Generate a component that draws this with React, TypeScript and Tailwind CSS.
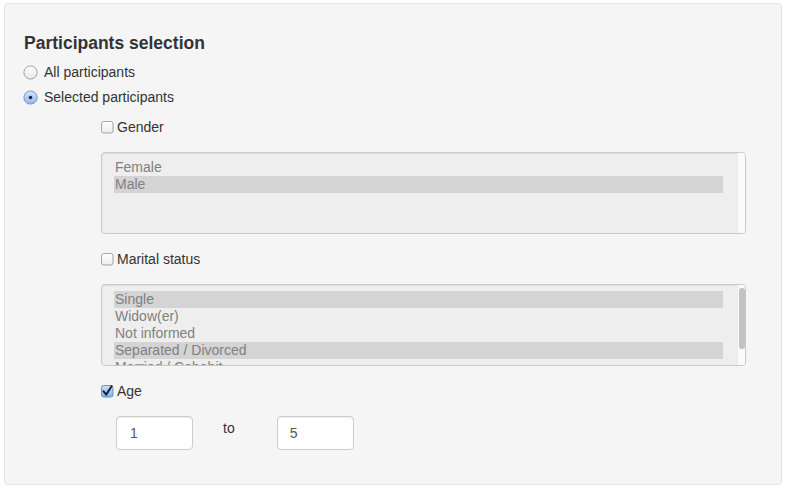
import React from "react";

const font = { fontFamily: '"Liberation Sans", Arial, Helvetica, sans-serif' };

function Radio({ checked }: { checked?: boolean }) {
  return (
    <svg width="15" height="15" viewBox="0 0 15 15" className="shrink-0">
      <defs>
        <linearGradient id={checked ? "rg1" : "rg0"} x1="0" y1="0" x2="0" y2="1">
          {checked ? (
            <>
              <stop offset="0" stopColor="#d6e6fb" />
              <stop offset="1" stopColor="#8fb7ee" />
            </>
          ) : (
            <>
              <stop offset="0" stopColor="#ffffff" />
              <stop offset="1" stopColor="#e6e6e6" />
            </>
          )}
        </linearGradient>
      </defs>
      <circle cx="7.5" cy="7.5" r="6.6" fill={`url(#${checked ? "rg1" : "rg0"})`} stroke={checked ? "#6a8fc4" : "#9a9a9a"} strokeWidth="0.9" />
      {checked && <circle cx="7.5" cy="7.5" r="1.8" fill="#1d2b44" />}
    </svg>
  );
}

function Checkbox({ checked }: { checked?: boolean }) {
  return (
    <svg width="13" height="13" viewBox="0 0 13 13" className="shrink-0">
      <defs>
        <linearGradient id={checked ? "cg1" : "cg0"} x1="0" y1="0" x2="0" y2="1">
          {checked ? (
            <>
              <stop offset="0" stopColor="#cfe1fa" />
              <stop offset="1" stopColor="#86b0ec" />
            </>
          ) : (
            <>
              <stop offset="0" stopColor="#ffffff" />
              <stop offset="1" stopColor="#ececec" />
            </>
          )}
        </linearGradient>
      </defs>
      <rect x="0.5" y="0.5" width="11.5" height="11.5" rx="2.2" fill={`url(#${checked ? "cg1" : "cg0"})`} stroke={checked ? "#5f86bd" : "#9a9a9a"} strokeWidth="0.9" />
      {checked && <path d="M2.6 6.4 L5.2 9.6 L10.6 1.2" fill="none" stroke="#16223a" strokeWidth="2" strokeLinecap="round" strokeLinejoin="round" />}
    </svg>
  );
}

function ListBox({ items, selected, thumb }: { items: string[]; selected: number[]; thumb?: boolean }) {
  return (
    <div className="relative w-[645px] h-[82px] rounded border border-[#c9c9c9] bg-[#eeeeee] overflow-hidden shadow-[inset_0_1px_1px_rgba(0,0,0,0.075)]">
      <div className="pt-[6px] pl-[12px] pr-[22px]">
        {items.map((it, i) => (
          <div
            key={it}
            className={`h-[17px] leading-[17px] text-[14px] text-[#808080] pl-[1px] ${selected.includes(i) ? "bg-[#d4d4d4]" : ""}`}
          >
            {it}
          </div>
        ))}
      </div>
      <div className="absolute right-0 top-0 bottom-0 w-[8px] bg-[#fafafa] border-l border-[#ececec]">
        {thumb && <div className="absolute left-[1px] top-[3px] w-[6px] h-[61px] rounded-full bg-[#c2c2c2]" />}
      </div>
    </div>
  );
}

export default function App() {
  return (
    <div className="w-[786px] h-[490px] bg-white pt-[3px] pl-[4px]" style={font}>
      <div className="w-[778px] h-[482px] rounded border border-[#e3e3e3] bg-[#f5f5f5] pl-[19px] pt-[29px] text-[#333333]">
        <div className="text-[17.5px] leading-[20px] font-bold text-[#333333]">Participants selection</div>
        <div className="mt-[7px] flex flex-col">
          <div className="h-[25px] flex items-center gap-[6px] -ml-[1px]">
            <Radio />
            <span className="text-[14px]">All participants</span>
          </div>
          <div className="h-[25px] flex items-center gap-[6px] -ml-[1px]">
            <Radio checked />
            <span className="text-[14px]">Selected participants</span>
          </div>
        </div>
        <div className="ml-[77px]">
          <div className="mt-[7px] h-[20px] flex items-center gap-[3px]">
            <Checkbox />
            <span className="text-[14px]">Gender</span>
          </div>
          <div className="mt-[15px]">
            <ListBox items={["Female", "Male"]} selected={[1]} />
          </div>
          <div className="mt-[15px] h-[20px] flex items-center gap-[3px]">
            <Checkbox />
            <span className="text-[14px]">Marital status</span>
          </div>
          <div className="mt-[15px]">
            <ListBox
              items={["Single", "Widow(er)", "Not informed", "Separated / Divorced", "Married / Cohabit"]}
              selected={[0, 3]}
              thumb
            />
          </div>
          <div className="mt-[15px] h-[20px] flex items-center gap-[3px]">
            <Checkbox checked />
            <span className="text-[14px]">Age</span>
          </div>
          <div className="mt-[15px] ml-[15px] flex items-start">
            <div className="w-[77px] h-[34px] rounded border border-[#cccccc] bg-white pl-[13px] flex items-center text-[14px] text-[#555555] shadow-[inset_0_1px_1px_rgba(0,0,0,0.075)]">1</div>
            <div className="ml-[30px] mt-[2px] text-[14px] leading-[20px]">to</div>
            <div className="ml-[42px] w-[77px] h-[34px] rounded border border-[#cccccc] bg-white pl-[12px] flex items-center text-[14px] text-[#555555] shadow-[inset_0_1px_1px_rgba(0,0,0,0.075)]">5</div>
          </div>
        </div>
      </div>
    </div>
  );
}
